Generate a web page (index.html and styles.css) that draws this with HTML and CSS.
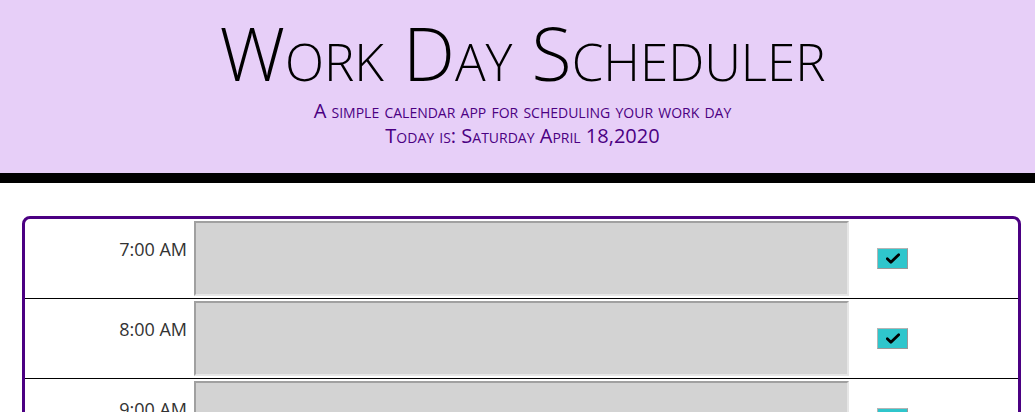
FILE: index.html
```html
<!DOCTYPE html>
<html>
<head>
<meta charset="utf-8">
<link rel="stylesheet" href="styles.css">
</head>
<body>
<header class="jumbotron">
  <h1 class="title">Work Day Scheduler</h1>
  <p class="lead">A simple calendar app for scheduling your work day<br>Today is: Saturday April 18,2020</p>
</header>
<main class="planner">
  <div class="row">
    <div class="hour">7:00 AM</div>
    <textarea class="task"></textarea>
    <div class="save-col"><button class="save"><svg viewBox="0 0 16 12" width="14" height="11"><path d="M1.5 6.2 L5.6 10.2 L14.5 1.6" fill="none" stroke="#000" stroke-width="3.2" stroke-linecap="round" stroke-linejoin="round"/></svg></button></div>
  </div>
  <div class="row">
    <div class="hour">8:00 AM</div>
    <textarea class="task"></textarea>
    <div class="save-col"><button class="save"><svg viewBox="0 0 16 12" width="14" height="11"><path d="M1.5 6.2 L5.6 10.2 L14.5 1.6" fill="none" stroke="#000" stroke-width="3.2" stroke-linecap="round" stroke-linejoin="round"/></svg></button></div>
  </div>
  <div class="row">
    <div class="hour">9:00 AM</div>
    <textarea class="task"></textarea>
    <div class="save-col"><button class="save"><svg viewBox="0 0 16 12" width="14" height="11"><path d="M1.5 6.2 L5.6 10.2 L14.5 1.6" fill="none" stroke="#000" stroke-width="3.2" stroke-linecap="round" stroke-linejoin="round"/></svg></button></div>
  </div>
</main>
</body>
</html>
```
FILE: styles.css
```css
html, body {
  margin: 0;
  padding: 0;
  background: #fff;
  font-family: "Open Sans", "Noto Sans", sans-serif;
}
.jumbotron {
  background: #e7cff8;
  border-bottom: 10px solid #000;
  padding: 9px 0 25px 10px;
  text-align: center;
}
.title {
  margin: 0;
  font-size: 73.5px;
  font-weight: 300;
  line-height: 88.8px;
  font-variant: small-caps;
  color: #000;
}
.lead {
  margin: 0;
  font-size: 20px;
  font-weight: 400;
  line-height: 25px;
  font-variant: small-caps;
  color: #4b0082;
}
.planner {
  margin: 33px 14px 0 22px;
  border: 3px solid #4b0082;
  border-radius: 8px 8px 0 0;
}
.row {
  display: flex;
  height: 79px;
  border-bottom: 1px solid #000;
}
.hour {
  width: 162px;
  padding: 17px 7px 0 0;
  text-align: right;
  font-size: 18px;
  line-height: 27px;
  color: #333;
}
.task {
  box-sizing: border-box;
  width: 655px;
  height: 75px;
  margin: 2px 0 0;
  background: #d3d3d3;
  border-style: solid;
  border-width: 2px;
  border-color: #a0a0a0 #e6e6e6 #e6e6e6 #a0a0a0;
  resize: none;
  padding: 0;
}
.save-col {
  display: flex;
  align-items: center;
  padding-left: 28px;
}
.save {
  box-sizing: border-box;
  width: 31px;
  height: 21px;
  padding: 0;
  background: #2fc6cc;
  border: 1px solid #b5b5b5;
  border-bottom-color: #999;
  border-right-color: #999;
  display: flex;
  align-items: center;
  justify-content: center;
}
```
